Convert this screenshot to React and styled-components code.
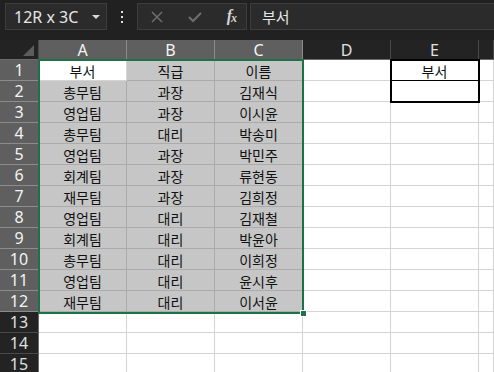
import React from "react";
import styled, { createGlobalStyle } from "styled-components";

const GlobalStyle = createGlobalStyle`
  html, body { margin: 0; padding: 0; background: #212121; overflow: hidden; }
  * { box-sizing: border-box; }
`;

const Page = styled.div`
  width: 494px;
  height: 372px;
  background: #212121;
  overflow: hidden;
  font-family: "Noto Sans", "Noto Sans CJK KR", sans-serif;
`;

const FormulaBar = styled.div`
  display: flex;
  align-items: stretch;
  height: 40px;
  padding: 3px 0 10px 5px;
`;

const NameBox = styled.div`
  width: 102px;
  display: flex;
  align-items: center;
  justify-content: space-between;
  padding: 0 6px 0 8px;
  background: #2b2b2b;
  border: 1px solid #3d3d3d;
  color: #e6e6e6;
  font-size: 16px;
`;

const Caret = styled.span`
  width: 0;
  height: 0;
  border-left: 4px solid transparent;
  border-right: 4px solid transparent;
  border-top: 4px solid #d8d8d8;
`;

const Dots = styled.div`
  width: 30px;
  display: flex;
  align-items: center;
  justify-content: center;
`;

const ActionBox = styled.div`
  width: 110px;
  display: flex;
  align-items: center;
  justify-content: space-between;
  padding: 0 10px 0 13px;
  background: #2b2b2b;
  border: 1px solid #3d3d3d;
`;

const Fx = styled.span`
  font-family: "Liberation Serif", serif;
  font-style: italic;
  font-weight: bold;
  font-size: 16px;
  color: #d6d6d6;
  letter-spacing: -1px;
  sub { font-size: 12px; vertical-align: -1px; }
`;

const FormulaInput = styled.div`
  flex: 1;
  margin-left: 3px;
  display: flex;
  align-items: center;
  padding-left: 11px;
  background: #2b2b2b;
  border: 1px solid #3d3d3d;
  border-right: none;
  color: #e8e8e8;
  font-family: "Noto Sans CJK KR", sans-serif;
  font-size: 15px;
`;

const Sheet = styled.div`
  position: relative;
  display: grid;
  grid-template-columns: 39px repeat(5, 88px) 1fr;
  grid-template-rows: 20px repeat(15, 21px);
`;

const Corner = styled.div`
  background: #232323;
  border-right: 1px solid #4a4a4a;
  border-bottom: 1px solid #6a6a6a;
  display: flex;
  align-items: flex-end;
  justify-content: flex-end;
  padding: 0 4px 3px 0;
`;

const Triangle = styled.span`
  width: 0;
  height: 0;
  border-left: 11px solid transparent;
  border-bottom: 11px solid #5c5c5c;
`;

const ColHeader = styled.div`
  display: flex;
  align-items: center;
  justify-content: center;
  background: ${(p) => (p.$sel ? "#5f5f5f" : "#232323")};
  border-right: 1px solid ${(p) => (p.$sel ? "#8c8c8c" : "#4a4a4a")};
  border-bottom: 1px solid ${(p) => (p.$sel ? "#a0a0a0" : "#6a6a6a")};
  color: ${(p) => (p.$sel ? "#f4f4f4" : "#e0e0e0")};
  font-size: 16px;
  line-height: 1;
  padding-top: 1px;
`;

const RowHeader = styled.div`
  display: flex;
  align-items: center;
  justify-content: center;
  background: ${(p) => (p.$sel ? "#5f5f5f" : "#232323")};
  border-right: 1px solid ${(p) => (p.$sel ? "#a0a0a0" : "#6a6a6a")};
  border-bottom: 1px solid ${(p) => (p.$sel ? "#8c8c8c" : "#4a4a4a")};
  color: ${(p) => (p.$sel ? "#f4f4f4" : "#e0e0e0")};
  font-size: 16px;
  line-height: 1;
`;

const Cell = styled.div`
  display: flex;
  align-items: center;
  justify-content: center;
  background: ${(p) => (p.$sel ? "#c6c6c6" : "#ffffff")};
  border-right: 1px solid ${(p) => (p.$sel ? "#ababab" : "#d4d4d4")};
  border-bottom: 1px solid ${(p) => (p.$bb ? "#000000" : p.$sel ? "#ababab" : "#d4d4d4")};
  color: #111;
  font-family: "Noto Sans CJK KR", sans-serif;
  font-size: 14px;
  line-height: 1;
  padding-top: 1px;
`;

const Selection = styled.div`
  position: absolute;
  left: 38px;
  top: 19px;
  width: 266px;
  height: 255px;
  border: 2px solid #1e7145;
  pointer-events: none;
`;

const Handle = styled.div`
  position: absolute;
  left: 300px;
  top: 270px;
  width: 7px;
  height: 7px;
  background: #1e7145;
  border: 1px solid #ffffff;
`;

const CopyBox = styled.div`
  position: absolute;
  left: 390px;
  top: 19px;
  width: 90px;
  height: 44px;
  border: 2px solid #000000;
  pointer-events: none;
`;

const rows = [
  ["부서", "직급", "이름"],
  ["총무팀", "과장", "김재식"],
  ["영업팀", "과장", "이시윤"],
  ["총무팀", "대리", "박송미"],
  ["영업팀", "과장", "박민주"],
  ["회계팀", "과장", "류현동"],
  ["재무팀", "과장", "김희정"],
  ["영업팀", "대리", "김재철"],
  ["회계팀", "대리", "박윤아"],
  ["총무팀", "대리", "이희정"],
  ["영업팀", "대리", "윤시후"],
  ["재무팀", "대리", "이서윤"],
];

const cols = ["A", "B", "C", "D", "E", ""];

export default function App() {
  const cells = [];
  cells.push(
    <Corner key="corner">
      <Triangle />
    </Corner>
  );
  cols.forEach((c, i) => {
    cells.push(
      <ColHeader key={"h" + i} $sel={i < 3}>
        {c}
      </ColHeader>
    );
  });
  for (let r = 0; r < 15; r++) {
    cells.push(
      <RowHeader key={"r" + r} $sel={r < 12}>
        {r + 1}
      </RowHeader>
    );
    for (let c = 0; c < 6; c++) {
      const inData = r < 12 && c < 3;
      const text = inData ? rows[r][c] : r === 0 && c === 4 ? "부서" : "";
      const sel = inData && !(r === 0 && c === 0);
      cells.push(
        <Cell key={r + "-" + c} $sel={sel} $bb={r === 0 && c === 4}>
          {text}
        </Cell>
      );
    }
  }

  return (
    <Page>
      <GlobalStyle />
      <FormulaBar>
        <NameBox>
          <span>12R x 3C</span>
          <Caret />
        </NameBox>
        <Dots>
          <svg width="4" height="14" viewBox="0 0 4 14">
            <rect x="1" y="1" width="2" height="2" fill="#e0e0e0" />
            <rect x="1" y="6" width="2" height="2" fill="#e0e0e0" />
            <rect x="1" y="11" width="2" height="2" fill="#e0e0e0" />
          </svg>
        </Dots>
        <ActionBox>
          <svg width="12" height="12" viewBox="0 0 12 12">
            <path d="M1 1 L11 11 M11 1 L1 11" stroke="#6e6e6e" strokeWidth="1.5" />
          </svg>
          <svg width="14" height="12" viewBox="0 0 14 12">
            <path d="M1 6 L5 10 L13 2" stroke="#6e6e6e" strokeWidth="2" fill="none" />
          </svg>
          <Fx>
            f<sub>x</sub>
          </Fx>
        </ActionBox>
        <FormulaInput>부서</FormulaInput>
      </FormulaBar>
      <Sheet>
        {cells}
        <Selection />
        <Handle />
        <CopyBox />
      </Sheet>
    </Page>
  );
}
